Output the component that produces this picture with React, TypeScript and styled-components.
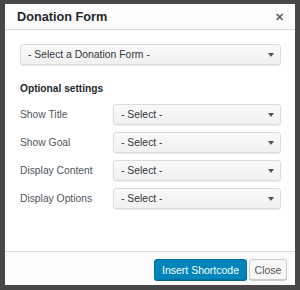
import styled, { createGlobalStyle } from 'styled-components';

const GlobalStyle = createGlobalStyle`
  html, body {
    margin: 0;
    padding: 0;
    background: #474747;
    font-family: "Liberation Sans", Arial, sans-serif;
  }
`;

const Page = styled.div`
  width: 300px;
  height: 290px;
  padding: 4px 5px 5px 5px;
  box-sizing: border-box;
`;

const Dialog = styled.div`
  width: 290px;
  height: 281px;
  background: #fff;
  display: flex;
  flex-direction: column;
`;

const Header = styled.div`
  height: 25px;
  display: flex;
  align-items: center;
  justify-content: space-between;
  padding: 0 11px 0 12px;
  background: #fcfcfc;
  border-bottom: 1px solid #dddddd;
`;

const Title = styled.h1`
  margin: 0;
  font-size: 12.7px;
  font-weight: bold;
  color: #23282d;
`;

const CloseX = styled.span`
  font-size: 11px;
  font-weight: bold;
  color: #666;
  line-height: 1;
  margin-top: 2px;
`;

const Body = styled.div`
  flex: 1;
  padding: 14px 15px 0 14px;
`;

const SelectBox = styled.div<{ $wide?: boolean }>`
  height: 21px;
  box-sizing: border-box;
  border: 1px solid #dcdcdc;
  border-radius: 3px;
  background: linear-gradient(#f9f9f9, #f1f1f1);
  box-shadow: 0 1px 1px rgba(0, 0, 0, 0.08);
  display: flex;
  align-items: center;
  justify-content: space-between;
  padding: 0 6px 0 7px;
  font-size: 10.4px;
  color: #32373c;
  width: ${p => (p.$wide ? '261px' : '168px')};
  margin-left: ${p => (p.$wide ? '1px' : '0')};
`;

const Arrow = styled.span`
  width: 0;
  height: 0;
  border-left: 3px solid transparent;
  border-right: 3px solid transparent;
  border-top: 4px solid #555;
`;

const SectionTitle = styled.div`
  margin-top: 18px;
  margin-bottom: 10px;
  font-size: 10.2px;
  font-weight: bold;
  color: #23282d;
  padding-left: 1px;
`;

const Rows = styled.div`
  display: flex;
  flex-direction: column;
  gap: 7px;
`;

const Row = styled.div`
  display: grid;
  grid-template-columns: 94px 1fr;
  align-items: center;
`;

const Label = styled.span`
  font-size: 10.3px;
  color: #50575e;
  padding-left: 1px;
`;

const Footer = styled.div`
  border-top: 1px solid #dddddd;
  background: #fcfcfc;
  height: 34px;
  display: flex;
  justify-content: flex-end;
  align-items: flex-start;
  gap: 2px;
  padding: 7px 8px 0 0;
  box-sizing: border-box;
`;

const Button = styled.button<{ $primary?: boolean }>`
  height: 21px;
  box-sizing: border-box;
  padding: 0;
  font-family: inherit;
  font-size: 10.5px;
  white-space: nowrap;
  border-radius: 3px;
  border: 1px solid ${p => (p.$primary ? '#0073aa' : '#cccccc')};
  background: ${p => (p.$primary ? '#0085ba' : '#f7f7f7')};
  color: ${p => (p.$primary ? '#ffffff' : '#555555')};
  box-shadow: 0 1px 0 ${p => (p.$primary ? '#006799' : '#cccccc')};
  width: ${p => (p.$primary ? '93px' : '38px')};
`;

const fields = ['Show Title', 'Show Goal', 'Display Content', 'Display Options'];

export default function App() {
  return (
    <>
      <GlobalStyle />
      <Page>
        <Dialog>
          <Header>
            <Title>Donation Form</Title>
            <CloseX>✕</CloseX>
          </Header>
          <Body>
            <SelectBox $wide>
              <span>- Select a Donation Form -</span>
              <Arrow />
            </SelectBox>
            <SectionTitle>Optional settings</SectionTitle>
            <Rows>
              {fields.map(f => (
                <Row key={f}>
                  <Label>{f}</Label>
                  <SelectBox>
                    <span>- Select -</span>
                    <Arrow />
                  </SelectBox>
                </Row>
              ))}
            </Rows>
          </Body>
          <Footer>
            <Button $primary>Insert Shortcode</Button>
            <Button>Close</Button>
          </Footer>
        </Dialog>
      </Page>
    </>
  );
}
